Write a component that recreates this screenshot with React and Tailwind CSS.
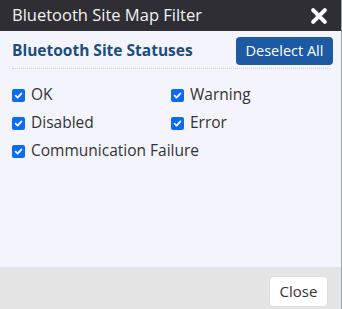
export default function App() {
  const Box = () => (
    <span className="w-[13px] h-[13px] rounded-[2px] bg-[#0b6bf5] flex items-center justify-center shrink-0">
      <svg width="9" height="9" viewBox="0 0 10 10">
        <path d="M1.8 5.2 L4 7.3 L8.3 2.7" stroke="white" strokeWidth="2" fill="none" strokeLinecap="round" strokeLinejoin="round" />
      </svg>
    </span>
  );
  const Item = ({ label }) => (
    <label className="flex items-center gap-[6px] h-[28px] text-[15.5px] text-[#333]">
      <Box />
      <span>{label}</span>
    </label>
  );
  return (
    <div className="w-[342px] h-[309px] flex bg-[#9aa]" style={{ fontFamily: '"Open Sans", "Noto Sans", sans-serif' }}>
      <div className="w-[341px] h-full flex flex-col bg-[#f4f4fc]">
        <div className="h-[31px] bg-[#2e2e34] flex items-center justify-between pl-[12px] pr-[13px]">
          <span className="text-[#f2f2f2] text-[16.5px] leading-none">Bluetooth Site Map Filter</span>
          <svg width="18" height="18" viewBox="0 0 20 20">
            <path d="M3.5 3.5 L16.5 16.5 M16.5 3.5 L3.5 16.5" stroke="white" strokeWidth="4.5" strokeLinecap="round" />
          </svg>
        </div>
        <div className="flex-1 pl-[12px] pr-[11px] pt-[6px]">
          <div className="flex items-center justify-between pb-[3px] relative">
            <span className="text-[15.5px] font-bold text-[#1b4d7e]">Bluetooth Site Statuses</span>
            <button className="h-[28px] w-[97px] mr-[-3px] rounded-[4px] bg-[#1d5aa3] text-white text-[14.5px]">Deselect All</button>
          </div>
          <div className="border-b border-dotted border-[#cfcfd8]" />
          <div className="grid grid-cols-[159px_1fr] mt-[12px]">
            <Item label="OK" />
            <Item label="Warning" />
            <Item label="Disabled" />
            <Item label="Error" />
            <div className="col-span-2"><Item label="Communication Failure" /></div>
          </div>
        </div>
        <div className="h-[42px] bg-[#e5e5e5] flex items-start justify-end pr-[13px] pt-[9px]">
          <button className="h-[31px] w-[59px] bg-white border border-[#ddd] rounded-[4px] text-[15px] text-[#333]">Close</button>
        </div>
      </div>
    </div>
  );
}
